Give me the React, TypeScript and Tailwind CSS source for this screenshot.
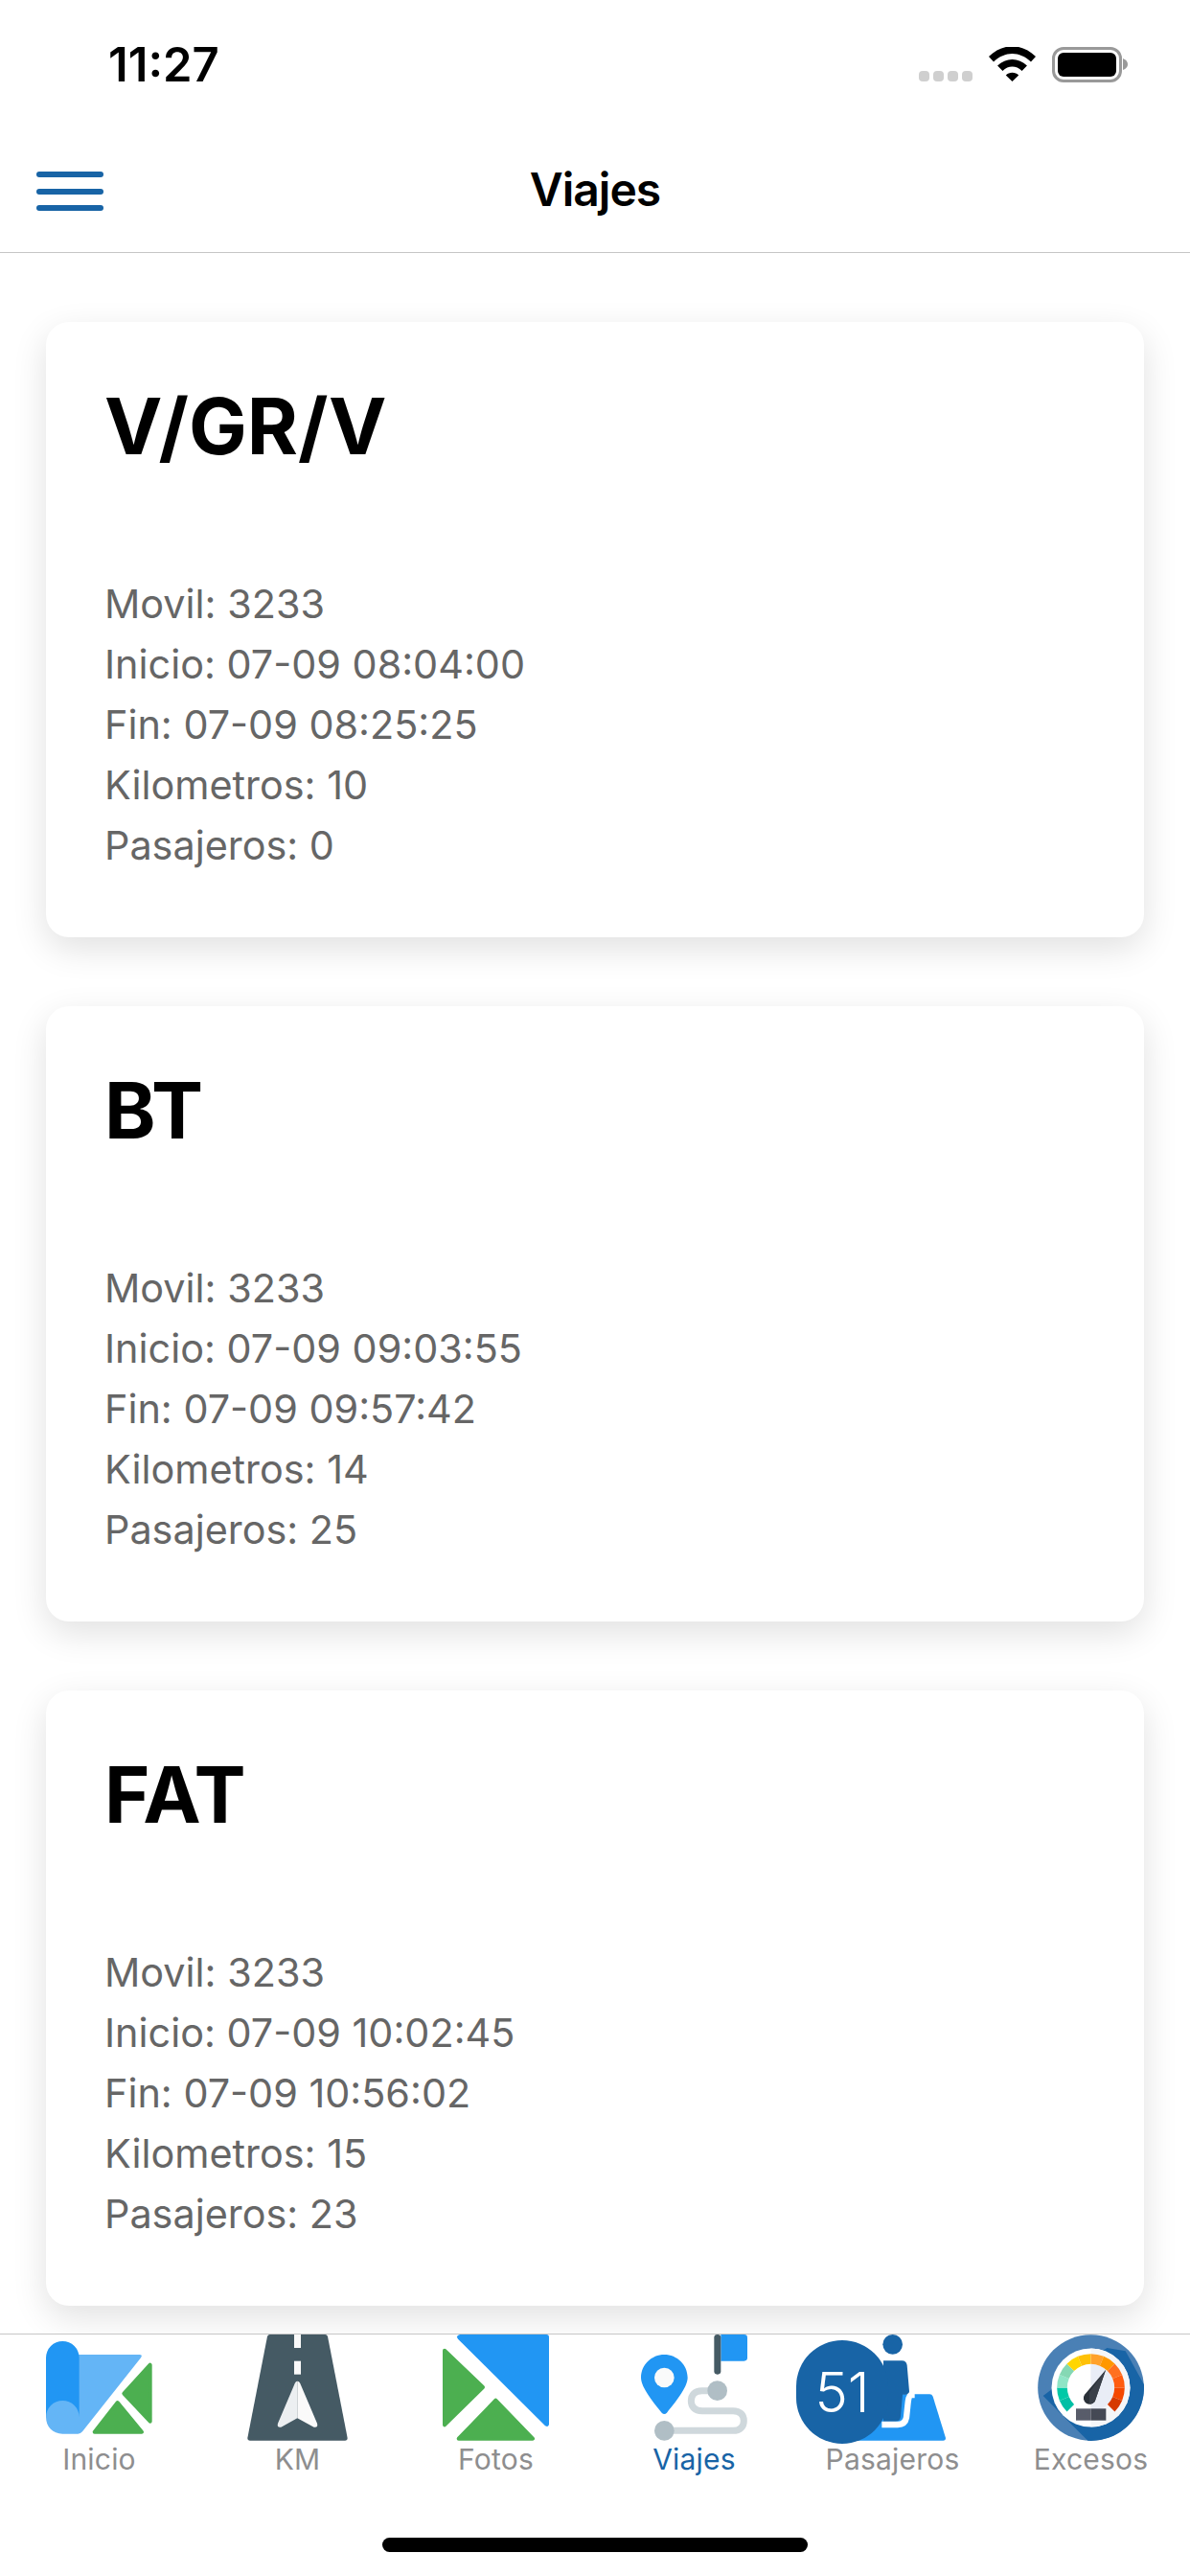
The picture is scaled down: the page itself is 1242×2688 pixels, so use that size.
import React from "react";

const trips = [
  { t: "V/GR/V", i: "07-09 08:04:00", f: "07-09 08:25:25", k: "10", p: "0" },
  { t: "BT", i: "07-09 09:03:55", f: "07-09 09:57:42", k: "14", p: "25" },
  { t: "FAT", i: "07-09 10:02:45", f: "07-09 10:56:02", k: "15", p: "23" },
];

function Icon({ x, children }: { x: number; children: React.ReactNode }) {
  return (
    <svg width="111" height="111" viewBox={`${x} 108 333 333`} className="block">
      {children}
    </svg>
  );
}

function Inicio() {
  return (
    <Icon x={144}>
      <path d="M240 171H436Q448 171 441 181L258 412Q252 419 244 419H196C166 419 144 397 144 367V300H240Z" fill="#64b5f6" />
      <path d="M144 181A52 52 0 0 1 248 181V367A52 52 0 0 0 144 367Z" fill="#2196f3" />
      <path d="M470 203V380L388 293Z" fill="#4caf50" stroke="#4caf50" strokeWidth="12" strokeLinejoin="round" />
      <path d="M368 321L444 413H296Z" fill="#4caf50" stroke="#4caf50" strokeWidth="12" strokeLinejoin="round" />
    </Icon>
  );
}

function Km() {
  return (
    <Icon x={765}>
      <path d="M845 108H1018Q1024 108 1026 114L1088 432Q1088 440 1080 440H783Q775 440 775 432L837 114Q839 108 845 108Z" fill="#455a64" />
      <rect x="921" y="108" width="21" height="42" fill="#fafafa" />
      <rect x="921" y="191" width="21" height="42" fill="#fafafa" />
      <path d="M931 254Q925 254 921 266L870 386Q866 400 880 398L931 370Z" fill="#eceff1" />
      <path d="M931 254Q938 254 942 266L993 386Q997 400 983 398L931 370Z" fill="#fafafa" />
    </Icon>
  );
}

function Fotos() {
  return (
    <Icon x={126}>
      <path d="M180 108H451Q459 108 459 116V388Q459 400 447 394L174 122Q166 112 180 108Z" fill="#2196f3" />
      <path d="M132 158L252 273L132 391Z" fill="#4caf50" stroke="#4caf50" strokeWidth="12" strokeLinejoin="round" />
      <path d="M292 314L408 434H176Z" fill="#4caf50" stroke="#4caf50" strokeWidth="12" strokeLinejoin="round" />
    </Icon>
  );
}

function Viajes() {
  return (
    <Icon x={747}>
      <path d="M986 284H938C915 284 904 298 904 316S915 347 938 347H1035C1058 347 1069 360 1069 378S1058 409 1035 409H820" fill="none" stroke="#cfd8dc" strokeWidth="21" />
      <circle cx="986" cy="284" r="31" fill="#b0bec5" />
      <circle cx="820" cy="409" r="31" fill="#b0bec5" />
      <path d="M820 171C780 171 747 203 747 243C747 275 790 325 812 353Q820 361 828 353C850 325 893 275 893 243C893 203 860 171 820 171Z" fill="#2196f3" />
      <circle cx="820" cy="243" r="31" fill="#fafafa" />
      <path d="M997 108H1070Q1080 108 1080 118V181Q1080 191 1070 191H997Z" fill="#2196f3" />
      <rect x="976" y="108" width="21" height="125" rx="10" fill="#455a64" />
    </Icon>
  );
}

function Pasajeros() {
  return (
    <Icon x={162}>
      <path d="M240 295H445Q452 295 455 302L495 432Q495 440 487 440H200Z" fill="#2196f3" />
      <circle cx="329" cy="139" r="31" fill="#1864a6" />
      <path d="M300 190H358Q372 190 374 204L381 286Q381 296 370 296H360L354 366Q352 380 338 380H300Z" fill="#1864a6" />
      <path d="M398 297H386C380 300 378 310 376 330L372 368Q368 390 345 390H295" fill="none" stroke="#fff" strokeWidth="19" />
    </Icon>
  );
}

const segColors = ["#00bfa5", "#00c9a7", "#8fe5c6", "#85d8b4", "#ffd600", "#ffc107", "#ffa12b", "#ff9800", "#ff7020", "#ff5d10", "#f44800", "#d63a00"];

function seg(i: number) {
  const cx = 949.5;
  const cy = 274.5;
  const r1 = 106;
  const r2 = 74;
  const a = ((-135 + i * 22.5) * Math.PI) / 180;
  const b = ((-135 + (i + 1) * 22.5) * Math.PI) / 180;
  const p = (r: number, t: number) => `${cx + r * Math.sin(t)} ${cy - r * Math.cos(t)}`;
  return `M${p(r1, a)}A${r1} ${r1} 0 0 1 ${p(r1, b)}L${p(r2, b)}A${r2} ${r2} 0 0 0 ${p(r2, a)}Z`;
}

function Excesos() {
  return (
    <Icon x={783}>
      <circle cx="949.5" cy="274.5" r="166" fill="#4a80b5" />
      <path d="M1058 160L1116 265V280A166 166 0 0 1 940 440.5L800 300L1000 150Z" fill="#1864a6" />
      <circle cx="949.5" cy="274.5" r="123" fill="#ffffff" />
      <path d="M949.5 151.5A123 123 0 0 1 949.5 397.5Z" fill="#f5f6f8" />
      <path d="M949.5 200.5A74 74 0 0 1 949.5 348.5Z" fill="#e9edf6" />
      {segColors.map((c, i) => (
        <path key={i} d={seg(i)} fill={c} />
      ))}
      <path d="M996 219L930 296A18 18 0 0 0 962 318Z" fill="#2a3038" />
      <path d="M996 219L945 289V324Q956 324 962 318Z" fill="#3a4049" />
      <rect x="903" y="340" width="47" height="37" fill="#585c6a" />
      <rect x="950" y="340" width="47" height="37" fill="#454955" />
    </Icon>
  );
}

const tabs = [
  { label: "Inicio", Ico: Inicio },
  { label: "KM", Ico: Km },
  { label: "Fotos", Ico: Fotos },
  { label: "Viajes", Ico: Viajes, active: true },
  { label: "Pasajeros", Ico: Pasajeros, badge: "51" },
  { label: "Excesos", Ico: Excesos },
];

export default function App() {
  return (
    <div className="flex h-[2688px] w-[1242px] flex-col overflow-hidden bg-white font-['Inter',sans-serif]">
      <div className="flex h-[133px] shrink-0 items-start justify-between pl-[113px] pr-[71px] pt-[43px]">
        <span className="text-[49px] font-semibold leading-[50px] text-black">11:27</span>
        <div className="flex items-start pt-[6px]">
          <div className="mr-[17px] mt-[25px] flex gap-[4px]">
            <span className="h-[11px] w-[11px] rounded-[4px] bg-[#cfcfcf]" />
            <span className="h-[11px] w-[11px] rounded-[4px] bg-[#cfcfcf]" />
            <span className="h-[11px] w-[11px] rounded-[4px] bg-[#cfcfcf]" />
            <span className="h-[11px] w-[11px] rounded-[4px] bg-[#cfcfcf]" />
          </div>
          <svg width="49" height="36" viewBox="247 58 146 107" className="mr-[17px] block">
            <path d="M247 88C290 45 350 45 393 88L378 104C343 70 297 70 262 104Z" fill="#000" />
            <path d="M274 116C300 90 340 90 366 116L350 132C332 115 308 115 290 132Z" fill="#000" />
            <path d="M300 146C310 135 330 135 340 146L320 165Z" fill="#000" />
          </svg>
          <div className="relative h-[37px] w-[73px] rounded-[12px] border-[3px] border-[#999999] p-[3px]">
            <div className="h-full w-full rounded-[6px] bg-black" />
            <svg width="5" height="12" viewBox="0 0 5 12" className="absolute right-[-9px] top-[9px] block">
              <path d="M0 0Q5 2 5 6T0 12Z" fill="#999999" />
            </svg>
          </div>
        </div>
      </div>

      <header className="relative flex h-[131px] shrink-0 items-center justify-center border-b border-[#c6c6c6]">
        <div className="absolute left-[38px] top-[46px] flex w-[70px] flex-col gap-[11.5px]">
          <span className="h-[6px] rounded-full bg-[#1864a6]" />
          <span className="h-[6px] rounded-full bg-[#1864a6]" />
          <span className="h-[6px] rounded-full bg-[#1864a6]" />
        </div>
        <h1 className="text-[48px] font-semibold leading-[60px] tracking-[-1px] text-black">Viajes</h1>
      </header>

      <main className="flex min-h-0 flex-1 flex-col gap-[72px] overflow-hidden px-[48px] pt-[72px]">
        {trips.map((c) => (
          <section key={c.t} className="h-[642px] shrink-0 rounded-[24px] bg-white pl-[61px] pt-[60px] shadow-[0_12px_36px_rgba(0,0,0,0.12)]">
            <h2 className="text-[81px] font-bold leading-[98px] text-black">{c.t}</h2>
            <div className="mt-[105px] text-[41.35px] leading-[63px] text-[#666666]">
              <p>Movil: 3233</p>
              <p>Inicio: {c.i}</p>
              <p>Fin: {c.f}</p>
              <p>Kilometros: {c.k}</p>
              <p>Pasajeros: {c.p}</p>
            </div>
          </section>
        ))}
      </main>

      <nav className="h-[253px] shrink-0 border-t border-[#c6c6c6] bg-white">
        <div className="grid grid-cols-6">
          {tabs.map(({ label, Ico, active, badge }) => (
            <div key={label} className="relative flex flex-col items-center">
              <Ico />
              <span className={`mt-[1px] text-[30px] leading-[36px] tracking-[0.2px] ${active ? "text-[#1864a6]" : "text-[#8e8e8f]"}`}>{label}</span>
              {badge && (
                <span className="absolute left-[3px] top-[6px] flex h-[108px] w-[96px] items-center justify-center rounded-[48px] bg-[#1864a6] text-[58px] font-light leading-none text-white">
                  {badge}
                </span>
              )}
            </div>
          ))}
        </div>
        <div className="mx-auto mt-[64px] h-[15px] w-[444px] rounded-full bg-black" />
      </nav>
    </div>
  );
}
